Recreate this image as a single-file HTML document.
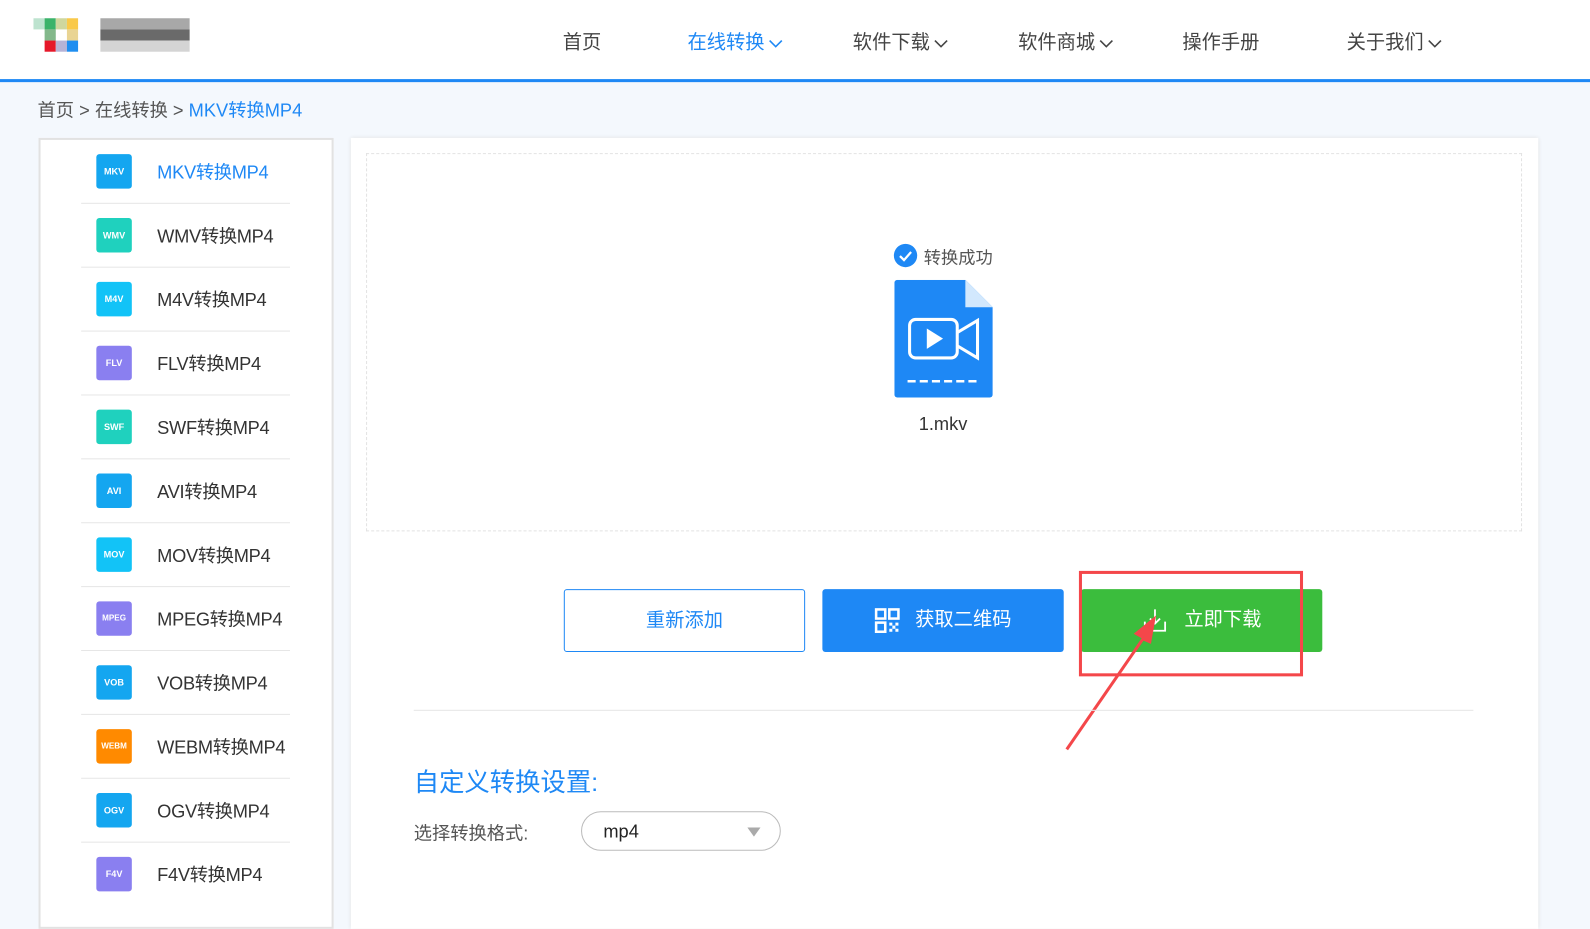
<!DOCTYPE html>
<html><head><meta charset="utf-8"><style>
*{margin:0;padding:0;box-sizing:border-box}
body{width:1590px;height:901px;overflow:hidden;background:#f4f8fd;font-family:"Liberation Sans","Noto Sans CJK SC",sans-serif;color:#333}
#w{position:absolute;left:0;top:0;width:1568px;height:889px;transform:scale(1.01403);transform-origin:0 0}
.a{position:absolute}
.hdr{left:0;top:0;width:1568px;height:81px;background:#fff;border-bottom:3px solid #1e88f5}
.nav{top:27px;font-size:19px;color:#444;white-space:nowrap}
.nav svg{vertical-align:middle;margin-left:4px}
.side{left:38px;top:136px;width:291px;height:780px;background:#fff;border:2px solid #e2e2e2}
.item{position:absolute;left:40px;width:206px;height:63px;border-bottom:1px solid #e6e6e6}
.ic{position:absolute;left:15px;top:14px;width:35px;height:34px;border-radius:3px;color:#fff;font-size:9px;font-weight:bold;text-align:center;line-height:34px}
.it{position:absolute;left:75px;top:18px;font-size:18px;color:#333;white-space:nowrap;letter-spacing:-0.3px}
.main{left:346px;top:136px;width:1171px;height:780px;background:#fff;box-shadow:0 0 4px #ddd}
.btn{top:581px;width:238px;height:62px;font-size:19px;text-align:center;line-height:62px;border-radius:3px}
</style></head><body><div id="w">
<div class="a hdr"></div>
<div class="a" style="left:33px;top:18px;width:165px;height:44px">
<div class="a" style="left:0;top:0;width:11px;height:11px;background:#bde3cf"></div>
<div class="a" style="left:11px;top:0;width:11px;height:11px;background:#3bb36a"></div>
<div class="a" style="left:22px;top:0;width:11px;height:11px;background:#cfd79e"></div>
<div class="a" style="left:33px;top:0;width:11px;height:11px;background:#f9c94a"></div>
<div class="a" style="left:11px;top:11px;width:11px;height:11px;background:#83b88b"></div>
<div class="a" style="left:33px;top:11px;width:11px;height:11px;background:#e9d493"></div>
<div class="a" style="left:11px;top:22px;width:11px;height:11px;background:#e6182a"></div>
<div class="a" style="left:22px;top:22px;width:11px;height:11px;background:#b6b3d6"></div>
<div class="a" style="left:33px;top:22px;width:11px;height:11px;background:#1f8ef0"></div>
<div class="a" style="left:66px;top:0;width:88px;height:11px;background:#a8a8a8"></div>
<div class="a" style="left:66px;top:11px;width:88px;height:11px;background:#6a6a6a"></div>
<div class="a" style="left:66px;top:22px;width:88px;height:11px;background:#d4d4d4"></div>
</div>
<div class="a nav" style="left:555px">首页</div>
<div class="a nav" style="left:678px;color:#1e88f5">在线转换<svg width="14" height="10"><path d="M1 2l6 6 6-6" fill="none" stroke="#1e88f5" stroke-width="1.6"/></svg></div>
<div class="a nav" style="left:841px">软件下载<svg width="14" height="10"><path d="M1 2l6 6 6-6" fill="none" stroke="#444" stroke-width="1.6"/></svg></div>
<div class="a nav" style="left:1004px">软件商城<svg width="14" height="10"><path d="M1 2l6 6 6-6" fill="none" stroke="#444" stroke-width="1.6"/></svg></div>
<div class="a nav" style="left:1166px">操作手册</div>
<div class="a nav" style="left:1328px">关于我们<svg width="14" height="10"><path d="M1 2l6 6 6-6" fill="none" stroke="#444" stroke-width="1.6"/></svg></div>
<div class="a" style="left:37px;top:95px;font-size:18px;color:#555">首页 &gt; 在线转换 &gt; <span style="color:#1e88f5">MKV转换MP4</span></div>
<div class="a side">
<div class="item" style="top:0"><div class="ic" style="background:#14a6f0">MKV</div><div class="it" style="color:#1e88f5">MKV转换MP4</div></div>
<div class="item" style="top:63px"><div class="ic" style="background:#1fd1be">WMV</div><div class="it">WMV转换MP4</div></div>
<div class="item" style="top:126px"><div class="ic" style="background:#12c3f7">M4V</div><div class="it">M4V转换MP4</div></div>
<div class="item" style="top:189px"><div class="ic" style="background:#8a7ff0">FLV</div><div class="it">FLV转换MP4</div></div>
<div class="item" style="top:252px"><div class="ic" style="background:#1fd1be">SWF</div><div class="it">SWF转换MP4</div></div>
<div class="item" style="top:315px"><div class="ic" style="background:#14a6f0">AVI</div><div class="it">AVI转换MP4</div></div>
<div class="item" style="top:378px"><div class="ic" style="background:#12c3f7">MOV</div><div class="it">MOV转换MP4</div></div>
<div class="item" style="top:441px"><div class="ic" style="background:#8a7ff0;font-size:8px">MPEG</div><div class="it">MPEG转换MP4</div></div>
<div class="item" style="top:504px"><div class="ic" style="background:#14a6f0">VOB</div><div class="it">VOB转换MP4</div></div>
<div class="item" style="top:567px"><div class="ic" style="background:#ff8a00;font-size:8px">WEBM</div><div class="it">WEBM转换MP4</div></div>
<div class="item" style="top:630px"><div class="ic" style="background:#14a6f0">OGV</div><div class="it">OGV转换MP4</div></div>
<div class="item" style="top:693px;border:none"><div class="ic" style="background:#8a7ff0">F4V</div><div class="it">F4V转换MP4</div></div>
</div>
<div class="a main"></div>
<div class="a" style="left:361px;top:151px;width:1140px;height:373px;border:1px dashed #e2e2e2"></div>
<svg class="a" style="left:881px;top:240px" width="24" height="24"><circle cx="12" cy="12" r="11.5" fill="#1e88f5"/><path d="M6.5 12.5l4 4 7-8" fill="none" stroke="#fff" stroke-width="2.2"/></svg>
<div class="a" style="left:911px;top:240px;font-size:17px;color:#555">转换成功</div>
<svg class="a" style="left:882px;top:276px" width="97" height="116"><path d="M3 0H70L97 27V113a3 3 0 0 1-3 3H3a3 3 0 0 1-3-3V3a3 3 0 0 1 3-3z" fill="#1e88f5"/><path d="M70 0L97 27H70z" fill="#d2e8fd"/><rect x="15" y="39" width="47" height="38" rx="6" fill="none" stroke="#fff" stroke-width="3"/><path d="M62 52L82 40V77L62 65" fill="none" stroke="#fff" stroke-width="3"/><path d="M32 48L48 58L32 68z" fill="#fff"/><path d="M13 100H85" stroke="#fff" stroke-width="2.5" stroke-dasharray="8 4"/></svg>
<div class="a" style="left:906px;top:408px;font-size:18px;color:#333">1.mkv</div>
<div class="a btn" style="left:556px;border:1px solid #1e88f5;color:#1e88f5;background:#fff">重新添加</div>
<div class="a btn" style="left:811px;background:#1e88f5;color:#fff"><svg width="26" height="26" style="vertical-align:middle;margin-right:14px"><g fill="none" stroke="#fff" stroke-width="2.5"><rect x="2" y="2" width="9" height="9"/><rect x="15" y="2" width="9" height="9"/><rect x="2" y="15" width="9" height="9"/></g><path d="M15 15h3v3h-3zM21 15h3v3h-3zM18 18h3v3h-3zM15 21h3v3h-3zM21 21h3v3h-3z" fill="#fff"/></svg>获取二维码</div>
<div class="a btn" style="left:1066px;background:#3bbd3d;color:#fff"><svg width="26" height="26" style="vertical-align:middle;margin-right:16px"><path d="M13 2V16M8 11l5 5 5-5M3 14v9h20v-9" fill="none" stroke="#fff" stroke-width="1.8"/></svg>立即下载</div>
<div class="a" style="left:1064px;top:563px;width:221px;height:104px;border:3px solid #f4474a"></div>
<svg class="a" style="left:1040px;top:595px" width="110" height="150"><path d="M12 144L92 28" stroke="#f4474a" stroke-width="3"/><path d="M100 12L78 30L92 38z" fill="#f4474a"/><path d="M100 12L86 36L95 40z" fill="#f4474a"/></svg>
<div class="a" style="left:408px;top:700px;width:1045px;height:1px;background:#e6e6e6"></div>
<div class="a" style="left:408px;top:752px;font-size:25px;color:#1e88f5">自定义转换设置:</div>
<div class="a" style="left:408px;top:808px;font-size:18px;color:#555">选择转换格式:</div>
<div class="a" style="left:573px;top:800px;width:197px;height:39px;border:1px solid #bbb;border-radius:20px"><span class="a" style="left:21px;top:9px;font-size:18px;color:#222">mp4</span><svg class="a" style="left:163px;top:15px" width="14" height="10"><path d="M0 0H13L6.5 9z" fill="#aaa"/></svg></div>
</div></body></html>
